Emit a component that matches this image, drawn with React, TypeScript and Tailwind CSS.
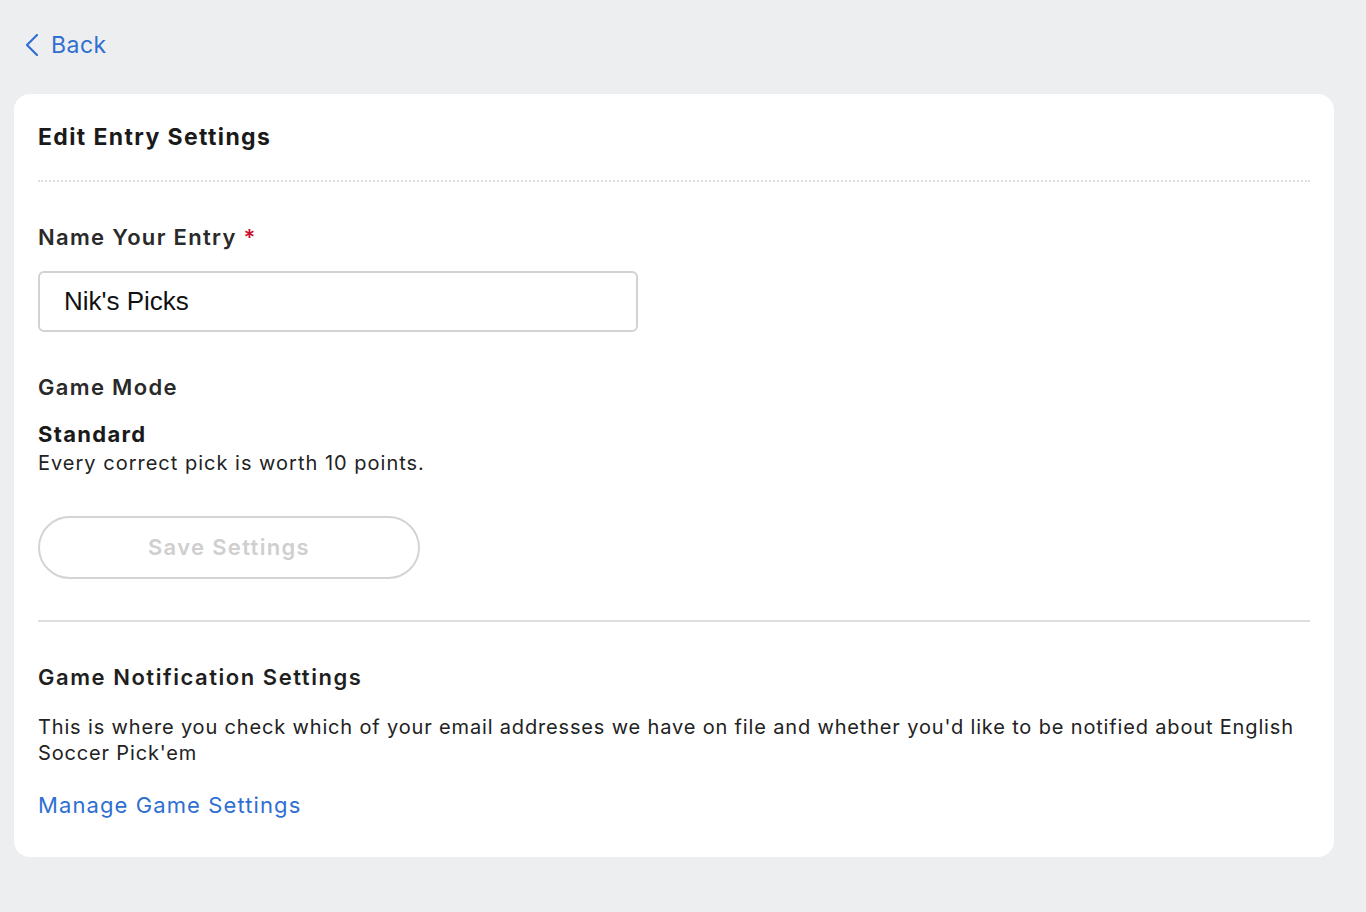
export default function App() {
  return (
    <div
      className="min-h-[912px] bg-[#edeef0] px-[14px] pb-[54px]"
      style={{ fontFamily: "Inter, 'Noto Sans', sans-serif" }}
    >
      <div className="flex h-[94px] items-start pt-[31px]">
        <a href="#" className="flex items-center gap-[12px] pl-[11px] text-[#2f6fd1]">
          <svg width="14" height="24" viewBox="0 0 14 24" fill="none">
            <path d="M12 2L2 12l10 10" stroke="currentColor" strokeWidth="2.2" strokeLinecap="round" strokeLinejoin="round" />
          </svg>
          <span className="text-[23px] leading-[28px] tracking-[0.02em]">Back</span>
        </a>
      </div>

      <div className="w-[1320px] rounded-[16px] bg-white px-[24px] pt-[24px] pb-[38px]">
        <h1 className="text-[23px] font-bold leading-[38px] tracking-[0.06em] text-[#1a1a1a]">Edit Entry Settings</h1>
        <div className="mt-[24px] border-t-2 border-dotted border-[#dedede]" />

        <label className="mt-[40px] block text-[22px] font-semibold leading-[30px] tracking-[0.06em] text-[#2a2a2a]">
          Name Your Entry <span className="text-[#c8102e]">*</span>
        </label>
        <input
          defaultValue="Nik's Picks"
          className="mt-[19px] block h-[61px] w-[600px] rounded-[6px] border-2 border-[#d2d2d2] px-[24px] text-[26px] text-[#111] outline-none"
          style={{ fontFamily: "'Liberation Sans', Arial, sans-serif" }}
        />

        <h2 className="mt-[40px] text-[22px] font-semibold leading-[30px] tracking-[0.06em] text-[#2a2a2a]">Game Mode</h2>
        <div className="mt-[19px] text-[22px] font-bold leading-[26px] tracking-[0.06em] text-[#1a1a1a]">Standard</div>
        <p className="mt-[3px] text-[20px] leading-[26px] tracking-[0.05em] text-[#222]">Every correct pick is worth 10 points.</p>

        <button
          disabled
          className="mt-[40px] flex h-[63px] w-[382px] items-center justify-center rounded-full border-2 border-[#d4d4d4] text-[22px] font-semibold tracking-[0.06em] text-[#cfcfcf]"
        >
          Save Settings
        </button>

        <div className="mt-[41px] border-t-2 border-[#dedede]" />

        <h2 className="mt-[40px] text-[22px] font-semibold leading-[30px] tracking-[0.07em] text-[#1f1f1f]">Game Notification Settings</h2>
        <p className="mt-[22px] text-[20px] leading-[26px] tracking-[0.042em] text-[#222]">
          This is where you check which of your email addresses we have on file and whether you'd like to be notified about English Soccer Pick'em
        </p>
        <a href="#" className="mt-[25px] block text-[22px] leading-[28px] tracking-[0.05em] text-[#2f6fd1]">
          Manage Game Settings
        </a>
      </div>
    </div>
  );
}
